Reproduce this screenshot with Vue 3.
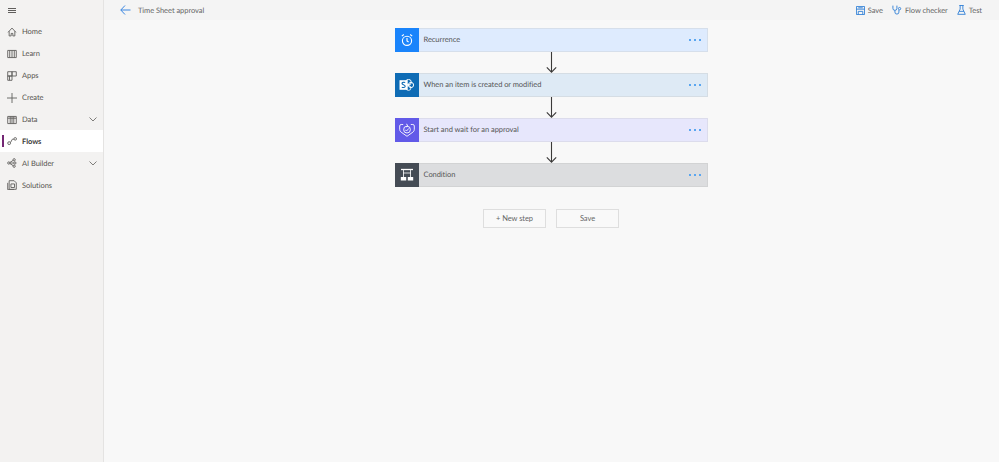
<script setup>
const nav = [
  { label: 'Home', icon: 'home' },
  { label: 'Learn', icon: 'learn' },
  { label: 'Apps', icon: 'apps' },
  { label: 'Create', icon: 'create' },
  { label: 'Data', icon: 'data', chevron: true },
  { label: 'Flows', icon: 'flows', active: true },
  { label: 'AI Builder', icon: 'ai', chevron: true },
  { label: 'Solutions', icon: 'solutions' },
]
const steps = [
  { label: 'Recurrence', kind: 'recurrence' },
  { label: 'When an item is created or modified', kind: 'sharepoint' },
  { label: 'Start and wait for an approval', kind: 'approval' },
  { label: 'Condition', kind: 'condition' },
]
</script>

<template>
  <div class="page">
    <aside class="sidebar">
      <button class="burger" aria-label="Menu">
        <svg width="8" height="5" viewBox="0 0 8 5"><path d="M0 .5h8M0 2.5h8M0 4.5h8" stroke="#605e5c" fill="none" /></svg>
      </button>
      <nav class="nav">
        <div v-for="item in nav" :key="item.label" class="nav-item" :class="{ active: item.active }">
          <svg class="nav-icon" width="10" height="10" viewBox="0 0 14 14" fill="none" stroke="#605e5c" stroke-width="1.25">
            <template v-if="item.icon === 'home'"><path d="M1.5 7.5L7 1.5l5.5 6M3 6v6.5h2.8V9h2.4v3.5H11V6" /></template>
            <template v-else-if="item.icon === 'learn'"><path d="M1 2h12v10H1zM7 2v10M3.8 2v10M10.2 2v10" /></template>
            <template v-else-if="item.icon === 'apps'"><path d="M1 1h6v6H1zM7 1h6v6H7zM1 7h6v6H1zM3.5 7v6" /></template>
            <template v-else-if="item.icon === 'create'"><path d="M7 0v14M0 7h14" /></template>
            <template v-else-if="item.icon === 'data'"><path d="M1 2h12v10H1zM4.5 2v10M7 2v10M9.5 2v10M1 4.5h12" /></template>
            <template v-else-if="item.icon === 'flows'"><circle cx="3" cy="10" r="2" /><circle cx="11.5" cy="4" r="1.8" /><path d="M5 9l2.5-4.5h2.2" /></template>
            <template v-else-if="item.icon === 'ai'"><circle cx="2.5" cy="7" r="1.6" /><circle cx="10" cy="2.5" r="1.6" /><circle cx="11" cy="7" r="1.6" /><circle cx="10" cy="11.5" r="1.6" /><path d="M4 6.3l4.7-3M4 7h5.5M4 7.7l4.7 3" /></template>
            <template v-else><path d="M3 1h7l3 3v9H3zM1 4v9.5h9" /><path d="M5.5 5.5h5v5h-5z" /></template>
          </svg>
          <span class="nav-label">{{ item.label }}</span>
          <svg v-if="item.chevron" class="chevron" width="8" height="5" viewBox="0 0 8 5" fill="none" stroke="#605e5c" stroke-width=".8"><path d="M.5.5L4 4 7.5.5" /></svg>
        </div>
      </nav>
    </aside>

    <div class="content">
      <header class="topbar">
        <div class="title-group">
          <svg width="11" height="10" viewBox="0 0 11 10" fill="none" stroke="#3a86e0"><path d="M5 .5L.8 5 5 9.5M.8 5H10.5" /></svg>
          <span class="title">Time Sheet approval</span>
        </div>
        <div class="actions">
          <div class="action">
            <svg width="9" height="9" viewBox="0 0 10 10" fill="none" stroke="#2f7fd6"><path d="M.5.5h9v9h-9zM.5 3.5h9M2.5 9.5V6h5v3.5M2.5 2h5" /></svg>
            <span>Save</span>
          </div>
          <div class="action">
            <svg width="10" height="10" viewBox="0 0 11 11" fill="none" stroke="#2f7fd6"><path d="M1 .7v3a2.2 2.2 0 0 0 4.4 0v-3M3.2 6v1.8a2.2 2.2 0 0 0 4.4 0V5.5" /><circle cx="8.3" cy="4" r="1.3" /></svg>
            <span>Flow checker</span>
          </div>
          <div class="action">
            <svg width="9" height="10" viewBox="0 0 10 11" fill="none" stroke="#2f7fd6"><path d="M2.5.5h5M3.5.5v4L.8 10.3h8.4L6.5 4.5v-4M2.3 7h5.4" /></svg>
            <span>Test</span>
          </div>
        </div>
      </header>

      <main class="canvas">
        <template v-for="(step, i) in steps" :key="step.label">
          <div v-if="i > 0" class="connector">
            <svg width="11" height="21" viewBox="0 0 11 21" fill="none" stroke="#3b3a39" stroke-width="1.1"><path d="M5.5 0v20M.8 15.3l4.7 4.9 4.7-4.9" /></svg>
          </div>
          <div class="card" :class="step.kind">
            <div class="card-icon">
              <svg v-if="step.kind === 'recurrence'" width="14" height="14" viewBox="0 0 14 14" fill="none" stroke="#fff" stroke-width="1.1"><circle cx="7" cy="7.8" r="4.6" /><path d="M7 5v3l1.6 1M1.8 3.2l2-1.7M12.2 3.2l-2-1.7" /></svg>
              <svg v-else-if="step.kind === 'sharepoint'" width="16" height="12" viewBox="0 0 16 12" fill="none"><circle cx="9.5" cy="3.2" r="2.8" stroke="#fff" /><circle cx="12" cy="6" r="2.6" stroke="#fff" /><circle cx="9.5" cy="9" r="2.4" stroke="#fff" opacity=".8" /><rect x="0.5" y="1.2" width="8.2" height="9.6" fill="#fff" /><path d="M6.2 3.6C5 3 3 3.2 3 4.5c0 1.4 3.2 1.1 3.2 2.8 0 1.3-2.3 1.5-3.4.9" stroke="#0f6cb5" stroke-width="1.1" /></svg>
              <svg v-else-if="step.kind === 'approval'" width="16" height="14" viewBox="0 0 16 14" fill="none" stroke="#fff" stroke-width=".9"><path d="M4.2 1.5H2.2A1.5 1.5 0 0 0 .7 3v3.3c0 1.5.8 2.6 2.2 3.4L8 13.3l5.1-3.6c1.4-.8 2.2-1.9 2.2-3.4V3a1.5 1.5 0 0 0-1.5-1.5h-2" /><circle cx="8" cy="6.6" r="3.4" /><path d="M6.2 6.7l1.3 1.3 2.4-2.6M7.2 1l1.8 1.5-1.8 1.5" /></svg>
              <svg v-else width="14" height="14" viewBox="0 0 14 14"><path d="M1 1.5h12" stroke="#fff" stroke-width="1.3" /><path d="M3.5 2v7M10.5 2v7M3 5h8" stroke="#fff" stroke-width=".8" /><path d="M.8 9h5.4v3.5H.8zM7.8 9h5.4v3.5H7.8z" fill="#fff" /></svg>
            </div>
            <span class="card-label">{{ step.label }}</span>
            <div class="dots"><i></i><i></i><i></i></div>
          </div>
        </template>
        <div class="buttons">
          <button class="btn">+ New step</button>
          <button class="btn">Save</button>
        </div>
      </main>
    </div>
  </div>
</template>

<style scoped>
.page {
  display: flex;
  width: 999px;
  height: 462px;
  overflow: hidden;
  font-family: Lato, "Open Sans", sans-serif;
  font-size: 7.5px;
  letter-spacing: -0.05px;
  text-rendering: geometricPrecision;
  color: #555;
  background: #f8f8f8;
}
.sidebar {
  width: 103px;
  flex: none;
  background: #f3f2f1;
  border-right: 1px solid #e4e3e2;
}
.burger {
  display: block;
  width: 24px;
  height: 21px;
  padding: 0 0 0 8px;
  border: 0;
  background: none;
  text-align: left;
}
.burger svg { display: block; }
.nav-item {
  display: flex;
  align-items: center;
  height: 21.9px;
  position: relative;
  color: #55534f;
}
.nav-item.active {
  background: #fff;
  font-weight: 700;
  color: #3b3a39;
}
.nav-item.active::before {
  content: "";
  position: absolute;
  left: 2px;
  top: 5px;
  bottom: 5px;
  width: 2px;
  background: #742774;
}
.nav-icon { margin: 0 5px 0 7px; flex: none; }
.nav-label { flex: 1; }
.chevron { margin-right: 6px; }
.content { flex: 1; display: flex; flex-direction: column; min-width: 0; }
.topbar {
  box-sizing: border-box;
  height: 20px;
  flex: none;
  background: #f4f4f4;
  display: flex;
  align-items: center;
  justify-content: space-between;
  padding: 0 17px 0 16px;
  color: #666;
}
.title-group { display: flex; align-items: center; gap: 7px; }
.actions { display: flex; gap: 9px; }
.action { display: flex; align-items: center; gap: 3px; }
.canvas {
  flex: 1;
  display: flex;
  flex-direction: column;
  align-items: center;
  padding: 8px 0 0 0;
  margin-left: -1px;
}
.card {
  width: 313px;
  height: 24px;
  flex: none;
  box-sizing: border-box;
  display: flex;
  align-items: center;
  border: 1px solid #dcdcdc;
  border-left: 0;
  color: #555;
}
.card-icon {
  width: 24px;
  height: 24px;
  flex: none;
  display: flex;
  align-items: center;
  justify-content: center;
}
.card-label { flex: 1; padding: 0 0 1px 5px; }
.recurrence { background: #deebfe; border-color: #d6dfeb; }
.recurrence .card-icon { background: #1a84fb; }
.sharepoint { background: #deeaf5; border-color: #d5dde4; }
.sharepoint .card-icon { background: #0f6cb5; }
.approval { background: #e7e7fc; border-color: #dcdcec; }
.approval .card-icon { background: #625ae8; }
.condition { background: #dcdddf; border-color: #d2d3d4; }
.condition .card-icon { background: #454c55; }
.dots { display: flex; gap: 3px; margin-right: 6px; }
.dots i { width: 2px; height: 2px; background: #5aa6f0; display: block; }
.connector { height: 21px; flex: none; line-height: 0; }
.buttons { display: flex; gap: 10px; margin-top: 22px; }
.btn {
  width: 63px;
  height: 19px;
  padding: 0;
  background: #f9f9f9;
  border: 1px solid #dedede;
  font: inherit;
  letter-spacing: inherit;
  color: #666;
}
</style>
